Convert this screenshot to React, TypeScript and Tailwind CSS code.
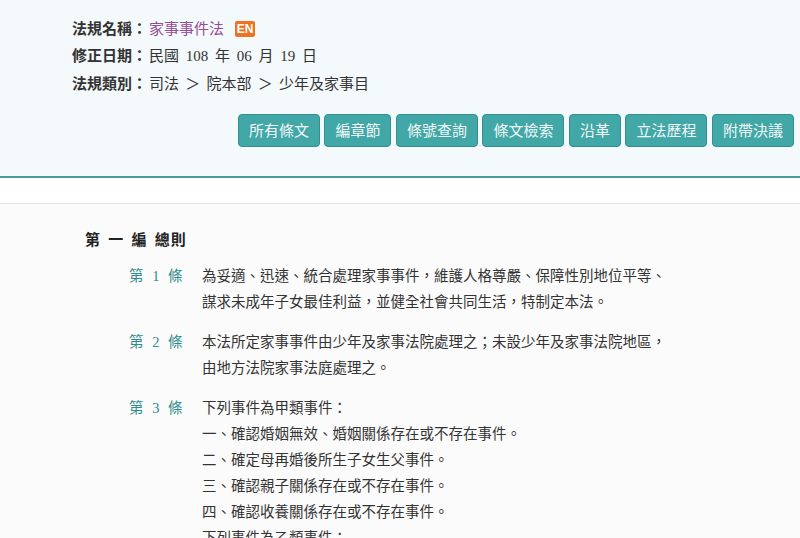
import * as React from "react";

const FONT = '"Liberation Serif", "Noto Sans CJK TC", serif';

const buttons = ["所有條文", "編章節", "條號查詢", "條文檢索", "沿革", "立法歷程", "附帶決議"];

interface Article {
    no: string;
    lines: string[];
}

const articles: Article[] = [
    {
        no: "1",
        lines: [
            "為妥適、迅速、統合處理家事事件，維護人格尊嚴、保障性別地位平等、",
            "謀求未成年子女最佳利益，並健全社會共同生活，特制定本法。",
        ],
    },
    {
        no: "2",
        lines: [
            "本法所定家事事件由少年及家事法院處理之；未設少年及家事法院地區，",
            "由地方法院家事法庭處理之。",
        ],
    },
    {
        no: "3",
        lines: [
            "下列事件為甲類事件：",
            "一、確認婚姻無效、婚姻關係存在或不存在事件。",
            "二、確定母再婚後所生子女生父事件。",
            "三、確認親子關係存在或不存在事件。",
            "四、確認收養關係存在或不存在事件。",
            "下列事件為乙類事件：",
            "一、撤銷婚姻事件。",
        ],
    },
];

function InfoRow({ label, children }: { label: string; children: React.ReactNode }) {
    return (
        <div className="flex items-center h-[27.5px]">
            <span className="font-bold text-[#333] mr-[2px]">{label}</span>
            {children}
        </div>
    );
}

export default function App() {
    return (
        <div className="w-[800px] h-[538px] overflow-hidden bg-[#fbfbfb] text-[#333]" style={{ fontFamily: FONT }}>
            <div className="bg-[#f4f9fc] border-b-2 border-[#4b9a9f] pt-[15px] pb-[29px]">
                <div className="pl-[72px] text-[15px]">
                    <InfoRow label="法規名稱：">
                        <span className="text-[#944a96]">家事事件法</span>
                        <span className="ml-[11px] inline-flex items-center justify-center w-[20px] h-[16px] rounded-[2px] bg-[#f1711f] text-white text-[12px] font-bold" style={{ fontFamily: '"Liberation Sans", sans-serif' }}>
                            EN
                        </span>
                    </InfoRow>
                    <InfoRow label="修正日期：">
                        <span className="[word-spacing:3px]">民國 108 年 06 月 19 日</span>
                    </InfoRow>
                    <InfoRow label="法規類別：">
                        <span className="[word-spacing:2.5px]">司法 ＞ 院本部 ＞ 少年及家事目</span>
                    </InfoRow>
                </div>
                <div className="flex justify-end gap-[4.5px] pr-[6px] mt-[16px]">
                    {buttons.map((b) => (
                        <div
                            key={b}
                            className="h-[33px] px-[10px] flex items-center rounded-[4px] bg-[#41a7a7] border border-[#338f90] text-[#f2f7f7] text-[15px]"
                            style={{ fontFamily: '"Noto Sans CJK TC", sans-serif' }}
                        >
                            {b}
                        </div>
                    ))}
                </div>
            </div>
            <div className="h-[26px] bg-white border-b border-[#e4e6e6]" />
            <div className="pt-[23px] pl-[85px] text-[14.5px] leading-[26px]">
                <div className="font-bold text-[15px] text-[#222] tracking-[1px] [word-spacing:2.5px]">第 一 編 總則</div>
                <div className="mt-[10px] flex flex-col gap-[14px] pl-[44px]">
                    {articles.map((a) => (
                        <div key={a.no} className="flex">
                            <div className="w-[73px] shrink-0 text-[#2f8d8c] tracking-[1px] [word-spacing:3px]">第 {a.no} 條</div>
                            <div className="flex flex-col">
                                {a.lines.map((l, i) => (
                                    <div key={i}>{l}</div>
                                ))}
                            </div>
                        </div>
                    ))}
                </div>
            </div>
        </div>
    );
}
